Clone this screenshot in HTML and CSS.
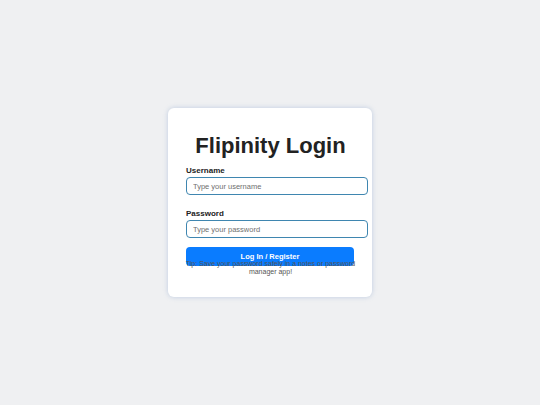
FILE: index.html
```html
<!DOCTYPE html>
<html lang="en">
<head>
<meta charset="utf-8">
<title>Flipinity Login</title>
<link rel="stylesheet" href="styles.css">
</head>
<body>
<div class="card">
  <h1 class="title">Flipinity Login</h1>
  <form class="form">
    <label class="label" for="u">Username</label>
    <input class="input" id="u" type="text" placeholder="Type your username">
    <label class="label label-gap" for="p">Password</label>
    <input class="input" id="p" type="password" placeholder="Type your password">
    <button class="button" type="button">Log In / Register</button>
    <p class="tip">Tip: Save your password safely in a notes or password manager app!</p>
  </form>
</div>
</body>
</html>
```

FILE: styles.css
```css
html, body {
  margin: 0;
  padding: 0;
}
body {
  background: #eff0f2;
  font-family: "Liberation Sans", Arial, sans-serif;
  min-height: 100vh;
  display: flex;
  align-items: center;
  justify-content: center;
}
.card {
  background: #ffffff;
  width: 169px;
  padding: 18px 17px 22px 18px;
  border-radius: 6px;
  box-shadow: 0 0 5px rgba(120, 150, 200, 0.4);
}
.title {
  font-size: 22px;
  font-weight: bold;
  color: #222222;
  text-align: center;
  margin: 7px -20px 8px;
  white-space: nowrap;
  line-height: 25px;
}
.form {
  display: block;
}
.label {
  display: block;
  font-size: 8px;
  font-weight: bold;
  color: #222;
  line-height: 9px;
  margin-bottom: 2px;
}
.label-gap {
  margin-top: 14px;
}
.input {
  display: block;
  width: calc(100% - 1px);
  height: 16px;
  padding: 0 6px;
  border: 1.5px solid #3f86b0;
  border-radius: 4px;
  font-family: "Liberation Sans", Arial, sans-serif;
  font-size: 7.5px;
  color: #222;
  box-sizing: content-box;
  outline: none;
  background: #fff;
}
.input::placeholder {
  color: #6f6f6f;
}
.button {
  display: block;
  width: calc(100% - 1px);
  height: 19px;
  margin-top: 9px;
  background: #0a7cff;
  color: #fff;
  border: none;
  border-radius: 4px;
  font-family: "Liberation Sans", Arial, sans-serif;
  font-size: 7.5px;
  font-weight: bold;
  padding: 0;
}
.tip {
  margin: -6px -3px 0;
  font-size: 7px;
  color: #555;
  text-align: center;
  line-height: 7.5px;
  position: relative;
}
```
